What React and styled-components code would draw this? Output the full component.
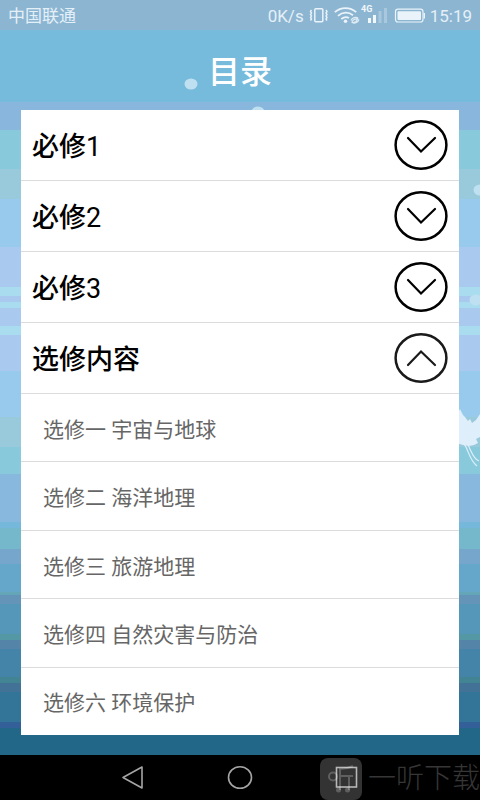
import { useState } from "react";
import styled, { createGlobalStyle } from "styled-components";

const chapters = [
  { id: 1, title: "必修", number: 1, items: [] },
  { id: 2, title: "必修", number: 2, items: [] },
  { id: 3, title: "必修", number: 3, items: [] },
  {
    id: 4,
    title: "选修内容",
    items: [
      "选修一 宇宙与地球",
      "选修二 海洋地理",
      "选修三 旅游地理",
      "选修四 自然灾害与防治",
      "选修六 环境保护",
    ],
  },
];

// sky to sea, every entry is [colour, where the band ends]
const bands = [
  ["#76badc", 102],
  ["#88b6dd", 130],
  ["#88cadb", 169],
  ["#98cadb", 199],
  ["#98caee", 247],
  ["#a9caee", 287],
  ["#a9dcee", 296],
  ["#a9caee", 302],
  ["#a9dcee", 308],
  ["#a9caee", 326],
  ["#a9dcee", 335],
  ["#a9caee", 371],
  ["#98caee", 417],
  ["#98cadb", 447],
  ["#88cadb", 474],
  ["#88b8dd", 522],
  ["#76b8dc", 528],
  ["#76b8cb", 549],
  ["#76a6cb", 564],
  ["#64a7cb", 592],
  ["#64a6b8", 595],
  ["#6594b9", 604],
  ["#5497b9", 634],
  ["#5497a5", 640],
  ["#5484a8", 649],
  ["#4384a8", 677],
  ["#438494", 683],
  ["#437297", 692],
  ["#337598", 722],
  ["#336098", 728],
  ["#226788", 800],
];

const stripes = bands
  .map(([color, end], i) => `${color} ${i ? bands[i - 1][1] : 0}px ${end}px`)
  .join(", ");

const Arrow = ({ up }) => (
  <svg width="54" height="50" viewBox="0 0 54 50" fill="none" aria-hidden="true">
    <ellipse cx="27" cy="25" rx="25.4" ry="23.7" stroke={up ? "#1a1a1a" : "#000"} strokeWidth="2.5" />
    <path
      d={up ? "M14 32 27 18.5 41 32" : "M14 18 27 31.5 41 18"}
      stroke={up ? "#1a1a1a" : "#000"}
      strokeWidth="2.2"
      strokeLinecap="round"
    />
  </svg>
);

const StatusIcons = () => (
  <svg width="118" height="24" viewBox="306 4 118 24" fill="none" aria-hidden="true">
    {/* vibrate */}
    <rect x="312.8" y="8.8" width="8" height="13" rx="1" stroke="#e9f3f9" strokeWidth="1.5" />
    <path
      d="M309.5 10 308.5 11.5 309.5 13 308.5 14.5 309.5 16 308.5 17.5 309.5 19 308.5 20.5M324 10 325 11.5 324 13 325 14.5 324 16 325 17.5 324 19 325 20.5"
      stroke="#e9f3f9"
      strokeWidth="1.4"
    />
    {/* wifi */}
    <path
      d="M332.8 12.2C338.8 6.8 348.2 6.8 354.2 12.2M336 15.8C340.5 11.8 346.7 11.8 351 15.2M339.3 19C342 16.8 345 16.8 347 18"
      stroke="#e9f3f9"
      strokeWidth="1.8"
    />
    <circle cx="343.5" cy="21.3" r="1.8" fill="#e9f3f9" />
    <path
      d="M349 20.5C350 17.5 354 16.5 356 18M350 22C351 19.5 354 18.5 356.5 19M351 23C353 23.5 356 22.5 357 19.5M349.5 22.5C352 22.8 354.5 21.5 355.5 19"
      stroke="#dcebf4"
      strokeWidth="1.2"
    />
    {/* mobile signal */}
    <g fill="#f1f7fb">
      <rect x="366" y="18" width="3" height="5" />
      <rect x="371" y="15" width="3" height="8" />
    </g>
    <g fill="#a9c8de">
      <rect x="376.5" y="11" width="3" height="12" />
      <rect x="382" y="8" width="3" height="15" />
    </g>
    <text x="359" y="12" fill="#f1f7fb" fontFamily="Roboto, sans-serif" fontSize="9" fontWeight="700">
      4G
    </text>
    {/* battery */}
    <rect x="393.5" y="9.2" width="27.5" height="12.8" rx="2.5" stroke="#e9f3f9" strokeWidth="1.2" />
    <rect x="395.5" y="11.2" width="23.5" height="8.8" rx="1" fill="#e9f3f9" />
    <path d="M422.3 13v5.5" stroke="#e9f3f9" strokeWidth="1.4" />
  </svg>
);

const SnowSpots = () => (
  <>
    <Spot $left="39.7%" $top={84} />
    <Spot $left="53.8%" $top={112} />
    <Spot $left="100%" $top={190} />
    <Spot $left="99.2%" $top={300} />
  </>
);

const Bird = () => (
  <BirdArt width="24" height="68" viewBox="0 0 24 68" aria-hidden="true">
    <path
      d="M0 8 3 11 4 9 7 15 9 17 12 21 14 19 16 23 20 20 24 14V37L20 39 22 43 18 45 13 46 7 45 0 43Z"
      fill="#deeefb"
    />
    <path d="M8 44C12 48 13 60 21 66M12 45C15 50 17 59 23 61" fill="none" stroke="#deeefb" strokeWidth="1.2" />
  </BirdArt>
);

const App = () => {
  const [openId, setOpenId] = useState(4);

  return (
    <>
      <GlobalStyle />
      <Screen>
        <StatusBar>
          <span>中国联通</span>
          <StatusRight>
            <span>0K/s</span>
            <StatusIcons />
            <span>15:19</span>
          </StatusRight>
        </StatusBar>
        <SnowSpots />
        <Bird />
        <Title>目录</Title>
        <Card>
          {chapters.map((chapter) => {
            const open = chapter.id === openId;
            return (
              <Chapter key={chapter.id} $open={open}>
                <ChapterButton
                  type="button"
                  aria-expanded={open}
                  onClick={() => setOpenId(open ? null : chapter.id)}
                >
                  <ChapterName>
                    {chapter.title}
                    {chapter.number && <ChapterNumber>{chapter.number}</ChapterNumber>}
                  </ChapterName>
                  <Arrow up={open} />
                </ChapterButton>
                {open && (
                  <Lessons>
                    {chapter.items.map((item) => (
                      <Lesson key={item}>
                        <LessonLink href="#">{item}</LessonLink>
                      </Lesson>
                    ))}
                  </Lessons>
                )}
              </Chapter>
            );
          })}
        </Card>
        <NavBar>
          <NavButton type="button" aria-label="Back">
            <svg width="26" height="26" viewBox="0 0 26 26" fill="none">
              <path d="M3 12.5 22 2V23Z" stroke="#a5a5a5" strokeWidth="1.6" strokeLinejoin="round" />
            </svg>
          </NavButton>
          <NavButton type="button" aria-label="Home">
            <svg width="26" height="26" viewBox="0 0 26 26" fill="none">
              <ellipse cx="13" cy="12.5" rx="11.5" ry="10.8" stroke="#a5a5a5" strokeWidth="1.6" />
            </svg>
          </NavButton>
          <NavButton type="button" aria-label="Recent">
            <svg width="26" height="26" viewBox="0 0 26 26" fill="none">
              <rect x="2.5" y="2.5" width="20" height="19.5" stroke="#a5a5a5" strokeWidth="1.6" />
            </svg>
          </NavButton>
          <Watermark>
            <svg width="42" height="42" viewBox="0 0 42 42" fill="none" aria-hidden="true">
              <rect width="42" height="42" rx="8" fill="#fff" fillOpacity="0.2" />
              <g stroke="#fff" strokeOpacity="0.22" strokeWidth="2">
                <circle cx="13" cy="18.5" r="4" />
                <path d="M20 32V11C25 11 29 10 33 8M21 18H33M29 18V32" />
              </g>
              <circle cx="18.5" cy="32" r="2.5" fill="#fff" fillOpacity="0.22" />
              <circle cx="27.5" cy="32" r="2.5" fill="#fff" fillOpacity="0.22" />
            </svg>
            <span>一听下载</span>
          </Watermark>
        </NavBar>
      </Screen>
    </>
  );
};

export default App;

const GlobalStyle = createGlobalStyle`
  * {
    box-sizing: border-box;
  }

  body {
    margin: 0;
    font-family: Roboto, "Noto Sans CJK SC", sans-serif;
  }
`;

const Screen = styled.div`
  position: relative;
  display: flex;
  flex-direction: column;
  min-height: 100vh;
  overflow: hidden;
  background: linear-gradient(${stripes});
`;

const StatusBar = styled.div`
  display: flex;
  align-items: center;
  justify-content: space-between;
  height: 30px;
  padding: 2px 8px 0;
  background: #8cb5d2;
  color: #e4f0f7;
  font-size: 17px;
  line-height: 28px;
`;

const StatusRight = styled.div`
  display: flex;
  align-items: center;
  gap: 4px;
`;

const Title = styled.h1`
  margin: 0;
  height: 80px;
  color: #fff;
  font-size: 32px;
  font-weight: 500;
  line-height: 84px;
  text-align: center;
`;

const Card = styled.main`
  position: relative;
  display: flex;
  flex: 1;
  flex-direction: column;
  margin: 0 21px 20px;
  background: #fff;
`;

const Chapter = styled.section`
  display: flex;
  flex: ${({ $open }) => ($open ? "1" : "none")};
  flex-direction: column;
`;

const ChapterButton = styled.button`
  display: flex;
  align-items: center;
  justify-content: space-between;
  height: 71px;
  padding: 0 11px;
  border: none;
  border-bottom: 1px solid #dcdcdc;
  background: none;
  color: #000;
  font-family: inherit;
  font-size: 27px;
  cursor: pointer;
`;

const ChapterName = styled.span`
  padding-bottom: 2px;
  font-weight: 500;
`;

const ChapterNumber = styled.span`
  font-weight: 400;
`;

const Lessons = styled.ul`
  display: flex;
  flex: 1;
  flex-direction: column;
  margin: 0;
  padding: 0;
  list-style: none;
`;

const Lesson = styled.li`
  display: flex;
  flex: 1;
  min-height: 60px;

  &:not(:last-child) {
    border-bottom: 1px solid #dcdcdc;
  }
`;

const LessonLink = styled.a`
  display: flex;
  flex: 1;
  align-items: center;
  padding: 0 22px;
  color: #666;
  font-size: 21px;
  text-decoration: none;
`;

const Spot = styled.span`
  position: absolute;
  top: ${({ $top }) => $top}px;
  left: ${({ $left }) => $left};
  width: 13px;
  height: 11px;
  border-radius: 50%;
  background: #bfe0f0;
  transform: translate(-50%, -50%);
`;

const BirdArt = styled.svg`
  position: absolute;
  top: 400px;
  right: 0;
`;

const NavBar = styled.nav`
  position: relative;
  display: flex;
  align-items: center;
  justify-content: center;
  gap: 81px;
  height: 45px;
  background: #000;
`;

const NavButton = styled.button`
  display: flex;
  padding: 0;
  border: none;
  background: none;
  cursor: pointer;
`;

const Watermark = styled.div`
  position: absolute;
  right: 0;
  bottom: 0;
  display: flex;
  align-items: center;
  gap: 6px;
  color: #363636;
  font-size: 28px;
  font-weight: 300;
  line-height: 42px;
  pointer-events: none;
`;
